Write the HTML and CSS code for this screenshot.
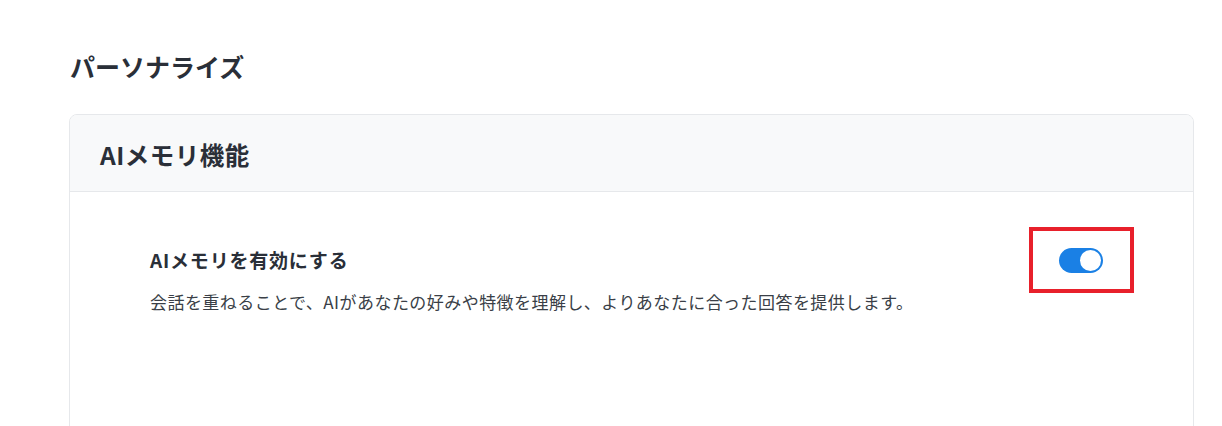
FILE: index.html
```html
<!DOCTYPE html>
<html lang="ja">
<head>
<meta charset="utf-8">
<title>パーソナライズ</title>
<link rel="stylesheet" href="styles.css">
</head>
<body>
<main class="page">
  <h1 class="page-title">パーソナライズ</h1>
  <section class="card">
    <header class="card-header">
      <h2 class="card-title">AIメモリ機能</h2>
    </header>
    <div class="card-body">
      <div class="setting">
        <div class="setting-text">
          <h3 class="setting-label">AIメモリを有効にする</h3>
          <p class="setting-desc">会話を重ねることで、AIがあなたの好みや特徴を理解し、よりあなたに合った回答を提供します。</p>
        </div>
        <div class="toggle-wrap">
          <span class="toggle is-on" role="switch" aria-checked="true"><span class="knob"></span></span>
          <span class="highlight"></span>
        </div>
      </div>
    </div>
  </section>
</main>
</body>
</html>
```
FILE: styles.css
```css
* { box-sizing: border-box; }
html, body { margin: 0; padding: 0; background: #ffffff; }
body {
  font-family: "Noto Sans CJK JP", "Noto Sans", sans-serif;
  color: #2a2f38;
}
.page {
  padding: 48px 28px 0 69px;
}
.page-title {
  margin: 0 0 30px 1px;
  font-size: 25px;
  line-height: 36px;
  font-weight: 700;
}
.card {
  border: 1px solid #e6e8eb;
  border-radius: 8px;
  overflow: hidden;
}
.card-header {
  background: #f8f9fa;
  border-bottom: 1px solid #e6e8eb;
  padding: 22px 30px 18px;
}
.card-title {
  margin: 0;
  font-size: 24.5px;
  line-height: 36px;
  font-weight: 700;
  letter-spacing: 0.5px;
}
.card-body {
  padding: 53px 90px 120px 80px;
}
.setting {
  display: flex;
  align-items: flex-start;
  justify-content: space-between;
}
.setting-label {
  margin: 0;
  font-size: 19px;
  line-height: 30px;
  font-weight: 700;
  letter-spacing: 0.8px;
}
.setting-desc {
  margin: 15px 0 0;
  font-size: 17px;
  line-height: 24px;
  color: #3a3f47;
  letter-spacing: 0.45px;
}
.toggle-wrap {
  position: relative;
  margin-top: 3px;
}
.toggle {
  display: block;
  width: 44px;
  height: 25px;
  border-radius: 13px;
  background: #1a80e5;
  position: relative;
}
.knob {
  position: absolute;
  right: 2px;
  top: 2px;
  width: 21px;
  height: 21px;
  border-radius: 50%;
  background: #ffffff;
}
.highlight {
  position: absolute;
  left: -30px;
  top: -21px;
  width: 105px;
  height: 66px;
  border: 4px solid #e8202b;
  pointer-events: none;
}
```
